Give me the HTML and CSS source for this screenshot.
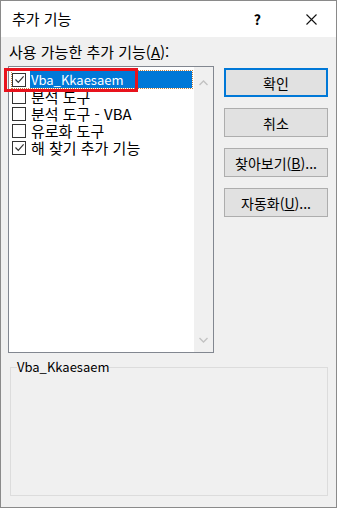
FILE: index.html
```html
<!DOCTYPE html>
<html lang="ko">
<head>
  <meta charset="UTF-8">
  <title>추가 기능</title>
  <link rel="stylesheet" href="styles.css">
</head>
<body>
  <div class="window">
    <div class="titlebar">
      <span class="title">추가 기능</span>
      <span class="help">?</span>
      <svg class="close" width="11" height="11" viewBox="0 0 11 11">
        <path d="M0.5 0.5 L10.5 10.5 M10.5 0.5 L0.5 10.5" stroke="#111" stroke-width="1.1" fill="none"/>
      </svg>
    </div>

    <div class="content">
      <div class="list-label">사용 가능한 추가 기능(<u>A</u>):</div>

      <div class="main">
        <div class="listbox">
          <ul class="items" id="addinList"></ul>
          <div class="scrollbar">
            <svg class="arrow" width="9" height="6" viewBox="0 0 9 6">
              <path d="M0.5 5 L4.5 1 L8.5 5" stroke="#c2c2c2" stroke-width="1.3" fill="none"/>
            </svg>
            <svg class="arrow" width="9" height="6" viewBox="0 0 9 6">
              <path d="M0.5 1 L4.5 5 L8.5 1" stroke="#c2c2c2" stroke-width="1.3" fill="none"/>
            </svg>
          </div>
          <div class="mark"></div>
        </div>

        <div class="buttons">
          <button class="btn default">확인</button>
          <button class="btn">취소</button>
          <button class="btn">찾아보기(<u>B</u>)...</button>
          <button class="btn">자동화(<u>U</u>)...</button>
        </div>
      </div>

      <fieldset class="desc">
        <legend>Vba_Kkaesaem</legend>
      </fieldset>
    </div>
  </div>

  <script>
    const addins = [
      { name: 'Vba_Kkaesaem', checked: true, selected: true, latin: true },
      { name: '분석 도구', checked: false },
      { name: '분석 도구 - VBA', checked: false },
      { name: '유로화 도구', checked: false },
      { name: '해 찾기 추가 기능', checked: true }
    ];

    const tick = '<svg width="11" height="11" viewBox="0 0 11 11"><path d="M1.5 5.5 L4.3 8.3 L9.6 2.4" stroke="#333" stroke-width="1.2" fill="none"/></svg>';

    function renderList() {
      let list = document.getElementById('addinList');
      list.innerHTML = '';
      addins.forEach(item => {
        const li = document.createElement('li');
        li.className = 'item' + (item.selected ? ' selected' : '') + (item.latin ? ' latin' : '');
        li.innerHTML = `
          <span class="check">${item.checked ? tick : ''}</span>
          <span class="name">${item.name}</span>
        `;
        list.appendChild(li);
      });
    }

    renderList();
  </script>
</body>
</html>
```

FILE: styles.css
```css
* {
  box-sizing: border-box;
  margin: 0;
  padding: 0;
}

body {
  background: #ffffff;
  font-family: 'Noto Sans CJK KR', 'Noto Sans', sans-serif;
  font-size: 15px;
  color: #000;
}

.window {
  width: 337px;
  height: 508px;
  border: 1px solid #8a8a8a;
  background: #f0f0f0;
  display: flex;
  flex-direction: column;
}

.titlebar {
  height: 36px;
  background: #ffffff;
  display: flex;
  align-items: center;
  padding: 0 19px 0 11px;
}

.title {
  flex: 1;
  line-height: 16px;
}

.help {
  font-size: 14px;
  font-weight: 600;
  margin-right: 45px;
}

.content {
  flex: 1;
  padding: 7px 8px 0 8px;
}

.list-label {
  line-height: 16px;
  margin-bottom: 6px;
}

.main {
  display: flex;
  gap: 10px;
  margin-left: -1px;
}

.listbox {
  position: relative;
  width: 206px;
  height: 287px;
  border: 1px solid #828790;
  background: #ffffff;
  display: flex;
}

.items {
  flex: 1;
  list-style: none;
  padding: 4px 0 0 3px;
}

.item {
  height: 17px;
  display: flex;
  align-items: center;
  gap: 4px;
}

.check {
  width: 14px;
  height: 14px;
  border: 1px solid #333;
  background: #fff;
  display: flex;
  align-items: center;
  justify-content: center;
}

.name {
  line-height: 17px;
  padding-left: 1px;
  white-space: nowrap;
}

.item.latin .name {
  font-size: 13px;
}

.item.selected {
  outline: 1px dotted #c08040;
  outline-offset: 0;
  margin-right: 2px;
}

.item.selected .name {
  flex: 1;
  background: #0078d7;
  color: #ffffff;
}

.scrollbar {
  width: 19px;
  background: #f0f0f0;
  display: flex;
  flex-direction: column;
  justify-content: space-between;
  align-items: center;
  padding: 13px 0 9px;
}

.mark {
  position: absolute;
  left: -5px;
  top: 1px;
  width: 134px;
  height: 24px;
  border: 3px solid #e8121c;
}

.buttons {
  display: flex;
  flex-direction: column;
  gap: 11px;
  padding-top: 2px;
}

.btn {
  width: 104px;
  height: 29px;
  border: 1px solid #adadad;
  background: #e1e1e1;
  font-family: inherit;
  font-size: 14px;
  color: #000;
}

.btn.default {
  border: 2px solid #0078d7;
}

.desc {
  margin: 6px 0 0 1px;
  height: 137px;
  border: 1px solid #dcdcdc;
  padding: 0;
}

.desc legend {
  margin-left: 6px;
  line-height: 16px;
  font-size: 13px;
}
```
